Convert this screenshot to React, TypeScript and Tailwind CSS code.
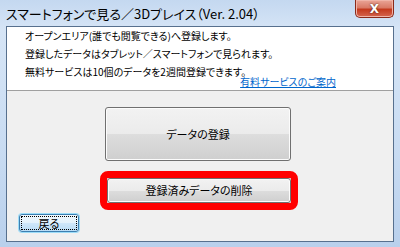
import React from "react";

const jp = {
  fontFamily: '"Noto Sans CJK JP", "Noto Sans", sans-serif',
  fontFeatureSettings: '"palt"',
};

function Win7Button({ label, className }: { label: string; className: string }) {
  return (
    <div
      className={`rounded-[3px] border border-[#707070] bg-[linear-gradient(#f2f2f2_0%,#ebebeb_50%,#dddddd_51%,#cfcfcf_100%)] shadow-[inset_0_0_0_1px_#fcfcfc] flex items-center justify-center text-[11px] text-black ${className}`}
      style={jp}
    >
      {label}
    </div>
  );
}

function App() {
  let lines: string[] = [
    "オープンエリア(誰でも閲覧できる)へ登録します。",
    "登録したデータはタブレット／スマートフォンで見られます。",
    "無料サービスは10個のデータを2週間登録できます。",
  ];

  return (
    <div className="w-[400px] h-[247px] flex flex-col px-[6px] pb-[5px] bg-[linear-gradient(180deg,#c4d8f0_0%,#d6e5f6_12%,#c9dcf2_60%,#b9d0ec_100%)] overflow-hidden">
      {/* Title bar */}
      <div className="h-[26px] flex justify-between items-start">
        <div className="pt-[6px] text-[13px] leading-[16px] text-black" style={jp}>
          スマートフォンで見る／3Dプレイス（Ver. 2.04）
        </div>
        <div className="w-[39px] h-[18px] rounded-b-[5px] border border-t-0 border-[#8a2a1a] bg-[linear-gradient(#eaa597_0%,#d97a66_45%,#c43a1e_55%,#d56650_100%)] shadow-[inset_0_0_0_1px_#f0b4a8] flex items-center justify-center">
          <span className="text-white font-bold text-[12px] leading-none [text-shadow:0_0_2px_#3a1a10]" style={{ fontFamily: '"DejaVu Sans", sans-serif' }}>
            X
          </span>
        </div>
      </div>

      {/* Client area */}
      <div className="flex-1 flex flex-col border border-[#57708e]">
        <div className="h-[64px] bg-white border-b border-[#a0a0a0] pl-[18px] pr-[57px] text-[10px] leading-[18px] text-black" style={jp}>
          {lines.map((res: string, i: number) => (
            <div key={i}>{res}</div>
          ))}
          <div className="flex justify-end -mt-[5px] leading-[12px]">
            <span className="text-[#0066cc] underline text-[10px]">有料サービスのご案内</span>
          </div>
        </div>

        <div className="flex-1 bg-[#f0f0f0] flex flex-col pt-[16px]">
          <Win7Button label="データの登録" className="ml-[98px] w-[186px] h-[54px]" />

          {/* highlighted button */}
          <div className="ml-[93px] mt-[10px] w-[198px] h-[39px] border-[7px] border-[#ff0000] rounded-[8px]">
            <Win7Button label="登録済みデータの削除" className="w-full h-full" />
          </div>

          <div className="ml-[12px] mt-[4px] w-[60px] h-[18px] rounded-[3px] border border-[#3c7fb1] shadow-[0_0_0_1px_#9cdcf8] bg-[linear-gradient(#f0f8fd_0%,#e2f1fb_50%,#cfe7fa_51%,#b9dcf5_100%)] p-[1px]">
            <div className="w-full h-full border border-dotted border-black flex items-center justify-center text-[11px] text-black leading-none" style={jp}>
              戻る
            </div>
          </div>
        </div>
      </div>
    </div>
  );
}

export default App;
